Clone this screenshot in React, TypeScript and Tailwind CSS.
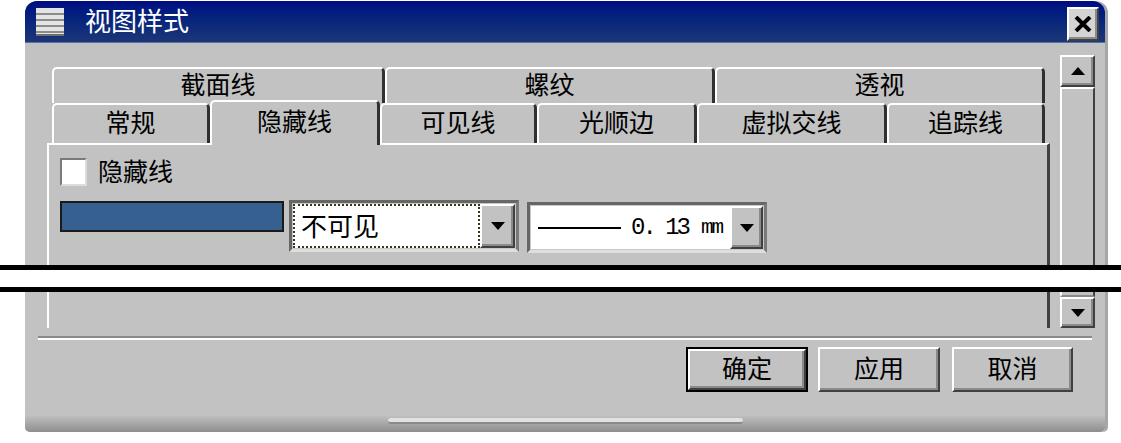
import React from 'react'

const cjk = "font-['Noto_Sans_CJK_SC','Noto_Sans_CJK_JP',sans-serif]"

const topTabs = [
  { label: '截面线', w: 'w-[333px]' },
  { label: '螺纹', w: 'w-[330px]' },
  { label: '透视', w: 'w-[330px]' },
]

const bottomTabs = [
  { label: '常规', w: 'w-[158px]', active: false },
  { label: '隐藏线', w: 'w-[170px]', active: true },
  { label: '可见线', w: 'w-[157px]', active: false },
  { label: '光顺边', w: 'w-[160px]', active: false },
  { label: '虚拟交线', w: 'w-[190px]', active: false },
  { label: '追踪线', w: 'w-[158px]', active: false },
]

const raised =
  'border-2 border-t-white border-l-white border-r-[#404040] border-b-[#404040] shadow-[inset_-2px_-2px_0_#8a8a8a] bg-[#c2c2c2]'

function Arrow({ up }: { up?: boolean }) {
  return (
    <svg width="14" height="8" viewBox="0 0 14 8">
      <path d={up ? 'M0 8 L7 0 L14 8 Z' : 'M0 0 L14 0 L7 8 Z'} fill="#000" />
    </svg>
  )
}

function MenuIcon() {
  return (
    <svg width="28" height="28" viewBox="0 0 28 28">
      <rect x="0" y="0" width="28" height="28" fill="#e4e4e4" />
      <rect x="0" y="5" width="28" height="2" fill="#8c8c8c" />
      <rect x="0" y="11" width="28" height="2" fill="#8c8c8c" />
      <rect x="0" y="17" width="28" height="2" fill="#8c8c8c" />
      <rect x="0" y="23" width="28" height="2" fill="#8c8c8c" />
      <rect x="0" y="26" width="28" height="2" fill="#6e6e6e" />
    </svg>
  )
}

function Sunken({ w, children }: { w: string; children: React.ReactNode }) {
  return (
    <div
      className={`${w} flex border-[3px] border-t-[#666666] border-l-[#666666] border-r-[#7a7a7a] border-b-[#dedede] bg-[#c8c8c8] p-px`}
    >
      {children}
    </div>
  )
}

export default function App() {
  return (
    <div className={`relative w-[1121px] h-[443px] bg-white overflow-hidden ${cjk}`}>
      <div className="pt-px pl-[25px]">
        <div className="w-[1083px] h-[431px] flex flex-col bg-[#c2c2c2] rounded-t-[12px] rounded-b-[5px] border-r-[3px] border-[#a6a6a6]">
          {/* title bar */}
          <div className="h-[42px] flex items-start rounded-t-[12px] bg-linear-to-b from-[#000a82] to-[#1c3676] border-b border-[#5670a8]">
            <div className="ml-[11px] mt-[7px]">
              <MenuIcon />
            </div>
            <span className="ml-[21px] mt-px text-[26px] leading-[36px] text-white">视图样式</span>
            <button
              className={`ml-auto mr-[6px] mt-[6px] w-[32px] h-[34px] flex items-center justify-center ${raised} bg-[#d4d4d4]`}
            >
              <svg width="18" height="16" viewBox="0 0 18 16">
                <path d="M2 1 L16 15 M16 1 L2 15" stroke="#000" strokeWidth="4" />
              </svg>
            </button>
          </div>

          {/* tabs + scrollbar */}
          <div className="flex items-start">
            <div className="ml-[22px] mt-[24px] w-[1003px] flex flex-col">
              <div className="pl-[5px] flex h-[36px]">
                {topTabs.map((t) => (
                  <div
                    key={t.label}
                    className={`${t.w} h-[36px] pb-[5px] flex items-center justify-center border-t-2 border-l-2 border-r-[3px] border-t-white border-l-white border-r-[#303030] rounded-t-[5px] text-[25px] text-black`}
                  >
                    {t.label}
                  </div>
                ))}
              </div>
              <div className="pl-[5px] flex items-end h-[40px]">
                {bottomTabs.map((t) => (
                  <div
                    key={t.label}
                    className={
                      t.active
                        ? `${t.w} relative z-10 h-[45px] -mb-[2px] pb-[5px] bg-[#c2c2c2] flex items-center justify-center border-t-2 border-l-2 border-r-[3px] border-t-white border-l-white border-r-[#303030] rounded-t-[5px] text-[25px] text-black`
                        : `${t.w} h-[40px] pb-[5px] bg-[#c2c2c2] flex items-center justify-center border-t-2 border-l-2 border-r-[3px] border-t-white border-l-white border-r-[#303030] rounded-t-[5px] text-[25px] text-black`
                    }
                  >
                    {t.label}
                  </div>
                ))}
              </div>
              <div className="h-[185px] border-t-2 border-l-2 border-t-white border-l-white border-r-[3px] border-r-[#404040] pl-[11px] pt-[13px]">
                <div className="flex items-center h-[28px]">
                  <div className="w-[27px] h-[28px] bg-white border-2 border-t-[#7a7a7a] border-l-[#7a7a7a] border-r-[#dcdcdc] border-b-[#dcdcdc]" />
                  <span className="ml-[11px] mb-[4px] text-[25px] leading-[28px] text-black">隐藏线</span>
                </div>
                <div className="mt-[14px] flex items-start">
                  <div className="mt-px w-[224px] h-[31px] bg-[#36608f] border-2 border-[#1a1a1a]" />
                  <div className="ml-[5px]">
                    <Sunken w="w-[230px] h-[52px]">
                      <div className="flex-1 bg-white border-2 border-dotted border-[#3a3320] flex items-center pl-[6px] pb-[3px]">
                        <span className="text-[26px] text-black leading-none">不可见</span>
                      </div>
                      <div className={`w-[35px] flex items-center justify-center ${raised}`}>
                        <Arrow />
                      </div>
                    </Sunken>
                  </div>
                  <div className="ml-[8px] mt-[2px]">
                    <Sunken w="w-[240px] h-[51px]">
                      <div className="flex-1 bg-white flex items-center pl-[7px]">
                        <div className="w-[83px] h-[2px] bg-black" />
                        <span className="ml-[10px] font-['Liberation_Mono',monospace] text-[24px] tracking-[-3px] text-black leading-none">
                          0. 13
                        </span>
                        <span className="ml-[13px] font-['Liberation_Mono',monospace] text-[21px] tracking-[-2px] text-black leading-none">
                          mm
                        </span>
                      </div>
                      <div className={`w-[33px] flex items-center justify-center ${raised}`}>
                        <Arrow />
                      </div>
                    </Sunken>
                  </div>
                </div>
              </div>
            </div>

            <div className="ml-[10px] mt-[12px] w-[35px] h-[273px] flex flex-col">
              <button className={`h-[32px] flex items-center justify-center ${raised}`}>
                <Arrow up />
              </button>
              <div className="flex-1 border-2 border-t-white border-l-white border-r-[#404040] border-b-[#8a8a8a] bg-[#c2c2c2]" />
              <button className={`h-[31px] flex items-center justify-center ${raised}`}>
                <Arrow />
              </button>
            </div>
          </div>

          {/* separator */}
          <div className="mt-[8px] ml-[13px] w-[1054px] h-[4px] border-t-2 border-t-[#8a8a8a] border-b-2 border-b-white" />

          {/* buttons */}
          <div className="mt-[7px] flex justify-end pr-[32px]">
            <div className="w-[122px] h-[45px] border-2 border-black flex">
              <button className={`flex-1 flex items-center justify-center pb-[3px] text-[25px] text-black ${raised}`}>确定</button>
            </div>
            <button className={`ml-[10px] w-[122px] h-[45px] flex items-center justify-center pb-[3px] text-[25px] text-black ${raised}`}>
              应用
            </button>
            <button className={`ml-[12px] w-[121px] h-[45px] flex items-center justify-center pb-[3px] text-[25px] text-black ${raised}`}>
              取消
            </button>
          </div>

          <div className="flex-1" />

          {/* bottom edge */}
          <div className="h-[17px] rounded-b-[5px] bg-linear-to-b from-[#c2c2c2] to-[#8e8e8e] pt-[3px]">
            <div className="ml-[363px] w-[355px] h-[6px] rounded-full bg-[#e2e2e2] border-b-2 border-[#8a8a8a]" />
          </div>
        </div>
      </div>

      {/* break mark across the figure */}
      <div className="absolute left-0 top-[265px] w-full h-[27px] border-y-[5px] border-black bg-white" />
    </div>
  )
}
